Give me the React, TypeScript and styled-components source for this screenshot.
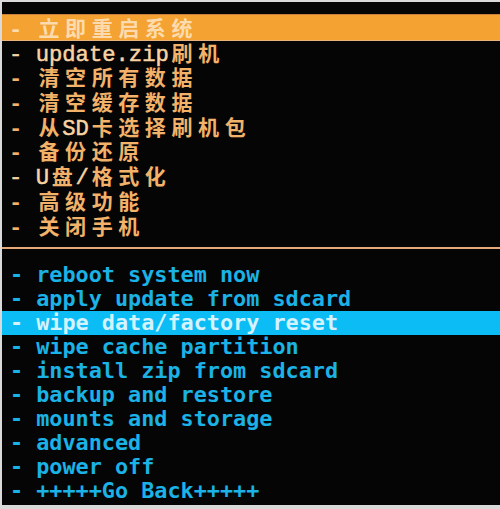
import styled, { createGlobalStyle } from "styled-components";

const CELL_TOP = 13.3;

const GlobalStyle = createGlobalStyle`
    html, body {
        margin: 0;
        padding: 0;
        background: #dadada;
    }
`;

const Screen = styled.div`
    margin: 2px 0 0 2px;
    width: 498px;
    height: 503px;
    background: #050505;
    padding-top: 13px;
    box-sizing: border-box;
    overflow: hidden;
`;

const ChineseMenu = styled.div`
    display: flex;
    flex-direction: column;
    font-family: "Liberation Mono", "Noto Sans CJK SC", monospace;
    font-size: 22.2px;
`;

const ChineseRow = styled.div<{ $active?: boolean }>`
    display: flex;
    align-items: baseline;
    height: 24.7px;
    line-height: 24.7px;
    padding-left: 7px;
    white-space: pre;
    color: ${({ $active }) => ($active ? "#fcdcae" : "#f2b26a")};
    background: ${({ $active }) => ($active ? "#f4a232" : "transparent")};
    box-shadow: ${({ $active }) => ($active ? "0 -1px 0 #c9803a, 0 1px 0 #e9b27a" : "none")};
`;

const Narrow = styled.span`
    color: #f8d4a4;
    -webkit-text-stroke: 0.5px #f8d4a4;
`;

const Dash = styled.span`
    font-weight: 700;
`;

const Wide = styled.span`
    width: ${CELL_TOP * 2}px;
    text-align: center;
    font-family: "Noto Sans CJK SC", sans-serif;
    font-size: 21px;
    font-weight: 700;
    line-height: 24.7px;
`;

const Separator = styled.div`
    margin-top: 10px;
    height: 2px;
    background: #e9a878;
`;

const RecoveryMenu = styled.div`
    margin-top: 14px;
    display: flex;
    flex-direction: column;
    font-family: "DejaVu Sans Mono", monospace;
    font-weight: 700;
    font-size: 21.8px;
`;

const RecoveryRow = styled.div<{ $active?: boolean }>`
    height: 24px;
    line-height: 24px;
    padding-left: 8px;
    white-space: pre;
    color: ${({ $active }) => ($active ? "#d4f3ff" : "#1bb2e6")};
    background: ${({ $active }) => ($active ? "#0cbcf4" : "transparent")};
`;

const isWide = (ch: string) => /[\u3000-\u9fff\uff00-\uffef]/.test(ch);

const CellText = ({ text }: { text: string }) => {
    const parts: JSX.Element[] = [];
    let run = "";
    const flush = (key: string) => {
        if (!run) return;
        parts.push(run === "- " ? <Dash key={key}>{run}</Dash> : <Narrow key={key}>{run}</Narrow>);
        run = "";
    };
    Array.from(text).forEach((ch, i) => {
        if (isWide(ch)) {
            flush(`r${i}`);
            parts.push(<Wide key={i}>{ch}</Wide>);
        } else {
            run += ch;
        }
    });
    flush("end");
    return <>{parts}</>;
};

const chineseItems = [
    "- 立即重启系统",
    "- update.zip刷机",
    "- 清空所有数据",
    "- 清空缓存数据",
    "- 从SD卡选择刷机包",
    "- 备份还原",
    "- U盘/格式化",
    "- 高级功能",
    "- 关闭手机",
];

const recoveryItems = [
    "- reboot system now",
    "- apply update from sdcard",
    "- wipe data/factory reset",
    "- wipe cache partition",
    "- install zip from sdcard",
    "- backup and restore",
    "- mounts and storage",
    "- advanced",
    "- power off",
    "- +++++Go Back+++++",
];

export default function App() {
    return (
        <>
            <GlobalStyle />
            <Screen>
                <ChineseMenu>
                    {chineseItems.map((item, i) => (
                        <ChineseRow key={item} $active={i === 0}>
                            <CellText text={item} />
                        </ChineseRow>
                    ))}
                </ChineseMenu>
                <Separator />
                <RecoveryMenu>
                    {recoveryItems.map((item, i) => (
                        <RecoveryRow key={item} $active={i === 2}>
                            {item}
                        </RecoveryRow>
                    ))}
                </RecoveryMenu>
            </Screen>
        </>
    );
}
